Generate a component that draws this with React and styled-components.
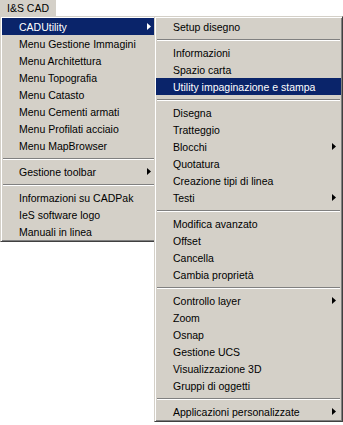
import React from "react";
import styled, { createGlobalStyle } from "styled-components";

const GlobalStyle = createGlobalStyle`
  html, body {
    margin: 0;
    padding: 0;
    background: #ffffff;
  }
  body {
    font-family: "Liberation Sans", Arial, sans-serif;
    font-size: 10.5px;
    color: #000000;
  }
`;

const leftItems = [
  { label: "CADUtility", arrow: true, active: true },
  { label: "Menu Gestione Immagini" },
  { label: "Menu Architettura" },
  { label: "Menu Topografia" },
  { label: "Menu Catasto" },
  { label: "Menu Cementi armati" },
  { label: "Menu Profilati acciaio" },
  { label: "Menu MapBrowser" },
  { sep: true },
  { label: "Gestione toolbar", arrow: true },
  { sep: true },
  { label: "Informazioni su CADPak" },
  { label: "IeS software logo" },
  { label: "Manuali in linea" },
];

const rightItems = [
  { label: "Setup disegno" },
  { sep: true },
  { label: "Informazioni" },
  { label: "Spazio carta" },
  { label: "Utility impaginazione e stampa", active: true },
  { sep: true },
  { label: "Disegna" },
  { label: "Tratteggio" },
  { label: "Blocchi", arrow: true },
  { label: "Quotatura" },
  { label: "Creazione tipi di linea" },
  { label: "Testi", arrow: true },
  { sep: true },
  { label: "Modifica avanzato" },
  { label: "Offset" },
  { label: "Cancella" },
  { label: "Cambia proprietà" },
  { sep: true },
  { label: "Controllo layer", arrow: true },
  { label: "Zoom" },
  { label: "Osnap" },
  { label: "Gestione UCS" },
  { label: "Visualizzazione 3D" },
  { label: "Gruppi di oggetti" },
  { sep: true },
  { label: "Applicazioni personalizzate", arrow: true },
];

const Arrow = () => (
  <ArrowSvg width="4" height="7" viewBox="0 0 4 7">
    <polygon points="0,0 4,3.5 0,7" fill="currentColor" />
  </ArrowSvg>
);

const PopupMenu = ({ items, width, overlap }) => (
  <Menu $width={width} $overlap={overlap}>
    {items.map((it, i) =>
      it.sep ? (
        <Separator key={i} />
      ) : (
        <Item key={i} $active={it.active}>
          <Label>{it.label}</Label>
          {it.arrow && <Arrow />}
        </Item>
      )
    )}
  </Menu>
);

const App = () => {
  return (
    <Page>
      <GlobalStyle />
      <MenuBar>
        <BarButton>I&amp;S CAD</BarButton>
      </MenuBar>
      <Cascade>
        <PopupMenu items={leftItems} width={158} />
        <PopupMenu items={rightItems} width={189} overlap={4} />
      </Cascade>
    </Page>
  );
};
export default App;

const Page = styled.div`
  width: 343px;
  height: 425px;
  overflow: hidden;
  background: #ffffff;
`;
const MenuBar = styled.div`
  display: flex;
  height: 16px;
`;
const BarButton = styled.div`
  width: 56px;
  height: 16px;
  line-height: 16px;
  text-align: center;
  background: #d4d0c8;
`;
const Cascade = styled.div`
  display: flex;
  align-items: flex-start;
`;
const Menu = styled.div`
  position: relative;
  flex: none;
  box-sizing: border-box;
  width: ${(p) => p.$width}px;
  margin-left: ${(p) => (p.$overlap ? -p.$overlap : 0)}px;
  padding: 1px;
  background: #d4d0c8;
  border: 1px solid;
  border-color: #d4d0c8 #404040 #404040 #d4d0c8;
  box-shadow: inset 1px 1px 0 #ffffff, inset -1px -1px 0 #808080;
  display: flex;
  flex-direction: column;
`;
const Item = styled.div`
  height: 17px;
  display: flex;
  align-items: center;
  padding: 0 5px 0 17px;
  background: ${(p) => (p.$active ? "#0a246a" : "transparent")};
  color: ${(p) => (p.$active ? "#ffffff" : "#000000")};
  white-space: nowrap;
`;
const Label = styled.span`
  flex: 1;
`;
const ArrowSvg = styled.svg`
  display: block;
  flex: none;
`;
const Separator = styled.div`
  height: 9px;
  display: flex;
  flex-direction: column;
  justify-content: center;
  padding: 0 1px;
  &::before {
    content: "";
    display: block;
    height: 1px;
    background: #808080;
  }
  &::after {
    content: "";
    display: block;
    height: 1px;
    background: #ffffff;
  }
`;
